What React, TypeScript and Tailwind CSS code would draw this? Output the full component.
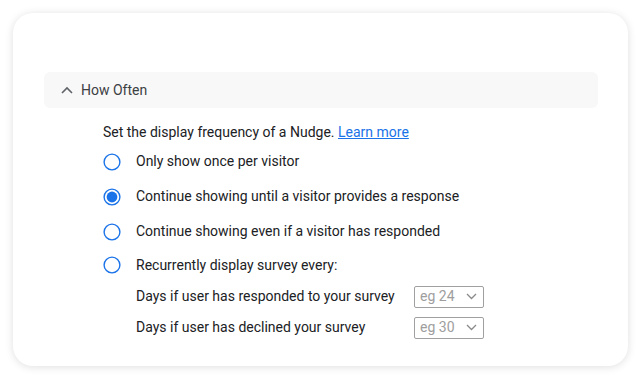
import React from 'react';

const Radio = ({ checked }: { checked?: boolean }) => (
    <svg width="18" height="18" viewBox="0 0 18 18" className="shrink-0">
        <circle cx="9" cy="9" r="7.9" fill="none" stroke="#1a73e8" strokeWidth="1.4" />
        {checked && <circle cx="9" cy="9" r="5.4" fill="#1a73e8" />}
    </svg>
);

const Select = ({ placeholder }: { placeholder: string }) => (
    <div className="flex h-[22px] w-[70px] items-center justify-between rounded-[2px] border border-[#a0a0a0] pl-[5px] pr-[6px] text-[14px] text-[#9e9e9e]">
        <span>{placeholder}</span>
        <svg width="11" height="7" viewBox="0 0 11 7">
            <path d="M1 1l4.5 4.5L10 1" fill="none" stroke="#8a8a8a" strokeWidth="1.3" />
        </svg>
    </div>
);

const options = [
    { label: 'Only show once per visitor' },
    { label: 'Continue showing until a visitor provides a response', checked: true },
    { label: 'Continue showing even if a visitor has responded' },
];

const App = () => {
    return (
        <div className="h-[380px] w-[642px] bg-white px-[13px] pt-[13px] font-['Roboto',sans-serif]">
            <div className="h-[353px] w-[615px] rounded-[20px] bg-white pl-[31px] pr-[30px] pt-[59px] shadow-[0_1px_8px_rgba(0,0,0,0.13)]">
                {/* header */}
                <div className="flex h-[36px] items-center rounded-[6px] bg-[#f8f8f8] pl-[17px]">
                    <svg width="12" height="8" viewBox="0 0 12 8" className="mr-[8px]">
                        <path d="M1 7l5-5 5 5" fill="none" stroke="#5f6368" strokeWidth="1.6" />
                    </svg>
                    <span className="text-[14px] text-[#3c4043]">How Often</span>
                </div>

                <div className="pl-[59px] pt-[14px] text-[14px] text-[#202124]">
                    <div className="flex h-[20px] items-center">
                        Set the display frequency of a Nudge.&nbsp;
                        <a className="text-[#1a73e8] underline">Learn more</a>
                    </div>
                    <div className="mt-[2px]">
                        {options.map((o) => (
                            <div key={o.label} className="flex h-[35px] items-center">
                                <Radio checked={o.checked} />
                                <span className="ml-[15px]">{o.label}</span>
                            </div>
                        ))}
                        <div className="flex h-[32px] items-center">
                            <Radio />
                            <span className="ml-[15px]">Recurrently display survey every:</span>
                        </div>
                    </div>
                    <div className="pl-[33px]">
                        <div className="flex h-[31px] items-center">
                            <span className="w-[278px]">Days if user has responded to your survey</span>
                            <Select placeholder="eg 24" />
                        </div>
                        <div className="flex h-[31px] items-center">
                            <span className="w-[278px]">Days if user has declined your survey</span>
                            <Select placeholder="eg 30" />
                        </div>
                    </div>
                </div>
            </div>
        </div>
    );
};

export default App;
